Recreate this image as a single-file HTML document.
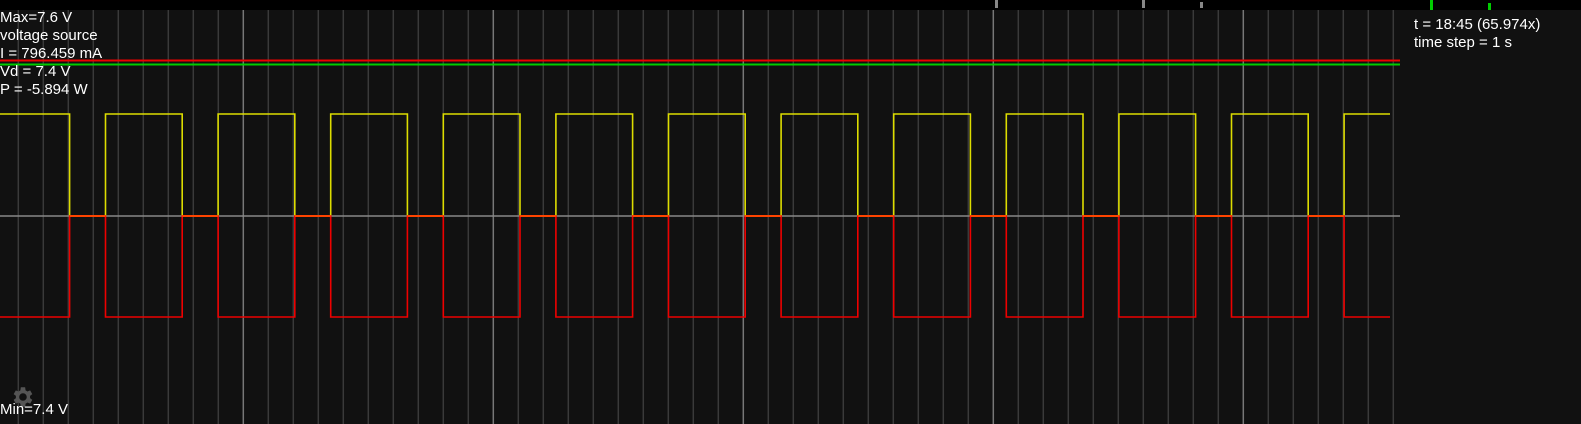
<!DOCTYPE html>
<html><head><meta charset="utf-8"><style>
html,body{margin:0;padding:0;background:#111;width:1581px;height:424px;overflow:hidden}
#top{position:absolute;left:0;top:0;width:1581px;height:10px;background:#000}
.t{position:absolute;color:#fff;font:15px "Liberation Sans",sans-serif;white-space:nowrap}
svg{position:absolute;left:0;top:0}
</style></head><body>
<svg id="s" width="1581" height="424"></svg>
<div id="top"></div>
<div style="position:absolute;left:995px;top:0;width:3px;height:8px;background:#888"></div>
<div style="position:absolute;left:1142px;top:0;width:3px;height:8px;background:#888"></div>
<div style="position:absolute;left:1200px;top:2px;width:3px;height:6px;background:#888"></div>
<div style="position:absolute;left:1430px;top:0;width:3px;height:10px;background:#0c0"></div>
<div style="position:absolute;left:1488px;top:3px;width:3px;height:7px;background:#0c0"></div>
<svg width="26" height="26" style="left:9px;top:384px" viewBox="0 0 24 24"><path fill="#555" d="M19.4 13a7.5 7.5 0 000-2l2.1-1.6-2-3.5-2.5 1a7.3 7.3 0 00-1.7-1L14.9 3h-4l-.4 2.9a7.3 7.3 0 00-1.7 1l-2.5-1-2 3.5L6.4 11a7.5 7.5 0 000 2l-2.1 1.6 2 3.5 2.5-1a7.3 7.3 0 001.7 1l.4 2.9h4l.4-2.9a7.3 7.3 0 001.7-1l2.5 1 2-3.5zM12.9 15.5a3.5 3.5 0 110-7 3.5 3.5 0 010 7z"/></svg>
<div class="t" style="left:0;top:9px;line-height:18px">Max=7.6 V<br>voltage source<br>I = 796.459 mA<br>Vd = 7.4 V<br>P = -5.894 W</div>
<div class="t" style="left:1414px;top:16px;line-height:18px">t = 18:45 (65.974x)<br>time step = 1 s</div>
<div class="t" style="left:0;top:401px">Min=7.4 V</div>
<script>
var s='',W=1400;
for(var x=18.3;x<W;x+=25){var maj=Math.abs(((x-243.3)/250)-Math.round((x-243.3)/250))<0.01;
s+='<line x1="'+x+'" y1="10" x2="'+x+'" y2="424" stroke="'+(maj?'#777':'#3a3a3a')+'" stroke-width="1.5"/>';}
s+='<line x1="0" y1="216" x2="'+W+'" y2="216" stroke="#888" stroke-width="1.5"/>';
s+='<line x1="0" y1="60.5" x2="'+W+'" y2="60.5" stroke="#e00" stroke-width="2"/>';
s+='<line x1="0" y1="64.5" x2="'+W+'" y2="64.5" stroke="#0c0" stroke-width="2"/>';
var P=112.6,H=76.7,st=105.5-P;var y='M0 114',r='M0 317';
for(var k=0;k<14;k++){var a=st+k*P,b=a+H;
 if(a>0&&a<W){y+=' L'+a+' 216 L'+a+' 114';r+=' L'+a+' 216 L'+a+' 317';}
 if(b>0&&b<W){y+=' L'+b+' 114 L'+b+' 216';r+=' L'+b+' 317 L'+b+' 216';}
 else if(b>=W){y+=' L'+(W-10)+' 114';r+=' L'+(W-10)+' 317';break;}}
s+='<path d="'+y+'" fill="none" stroke="#dd0" stroke-width="1.6"/>';
s+='<path d="'+r+'" fill="none" stroke="#e00" stroke-width="1.6"/>';
for(var k=0;k<14;k++){var a=st+k*P+H,b=a+P-H;if(b>W)b=W-10;if(a<W)s+='<line x1="'+Math.max(a,0)+'" y1="216" x2="'+b+'" y2="216" stroke="#f40" stroke-width="2"/>';}
document.getElementById('s').innerHTML=s;
</script>
</body></html>
